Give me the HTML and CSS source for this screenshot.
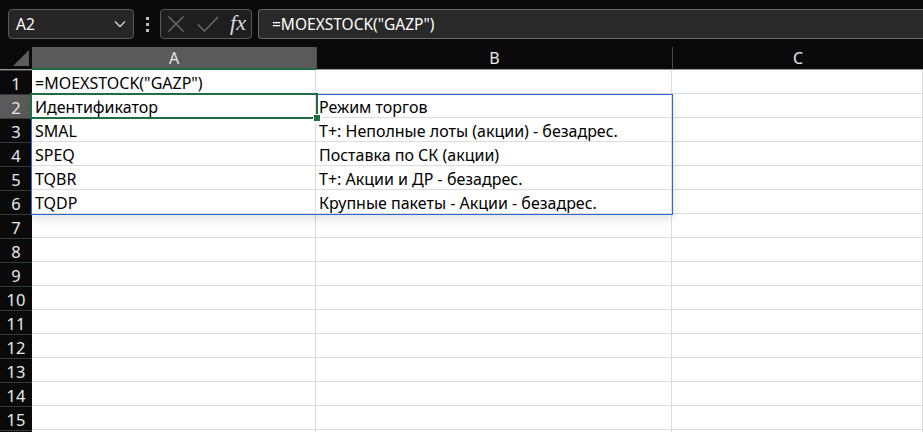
FILE: index.html
```html
<!DOCTYPE html>
<html lang="ru">
<head>
<meta charset="utf-8">
<title>Sheet</title>
<link rel="stylesheet" href="styles.css">
</head>
<body>
<div class="topbar">
  <div class="namebox">
    <span class="name">A2</span>
    <svg class="chev" width="12" height="8" viewBox="0 0 12 8"><path d="M1 1.5 L6 6.5 L11 1.5" fill="none" stroke="#d8d8d8" stroke-width="1.3"/></svg>
  </div>
  <div class="dots"><i></i><i></i><i></i></div>
  <div class="fbtns">
    <svg width="18" height="18" viewBox="0 0 18 18"><path d="M1.5 1.5 L16.5 16.5 M16.5 1.5 L1.5 16.5" stroke="#6e6e6e" stroke-width="1.4"/></svg>
    <svg class="check" width="22" height="18" viewBox="0 0 22 18"><path d="M1 9.5 L7.5 16 L21 2" fill="none" stroke="#6e6e6e" stroke-width="1.4"/></svg>
    <span class="fx">fx</span>
  </div>
  <div class="formula">=MOEXSTOCK("GAZP")</div>
</div>
<div class="sheet">
  <div class="grid">
    <div class="corner"><svg width="16" height="16" viewBox="0 0 16 16"><path d="M16 0 L16 16 L0 16 Z" fill="#5c5c5c"/></svg></div>
    <div class="colh sel">A</div>
    <div class="colh">B</div>
    <div class="colh">C</div>

    <div class="rowh">1</div><div class="cell">=MOEXSTOCK("GAZP")</div><div class="cell"></div><div class="cell"></div>
    <div class="rowh sel">2</div><div class="cell">Идентификатор</div><div class="cell">Режим торгов</div><div class="cell"></div>
    <div class="rowh">3</div><div class="cell">SMAL</div><div class="cell">T+: Неполные лоты (акции) - безадрес.</div><div class="cell"></div>
    <div class="rowh">4</div><div class="cell">SPEQ</div><div class="cell">Поставка по СК (акции)</div><div class="cell"></div>
    <div class="rowh">5</div><div class="cell">TQBR</div><div class="cell">T+: Акции и ДР - безадрес.</div><div class="cell"></div>
    <div class="rowh">6</div><div class="cell">TQDP</div><div class="cell">Крупные пакеты - Акции - безадрес.</div><div class="cell"></div>
    <div class="rowh">7</div><div class="cell"></div><div class="cell"></div><div class="cell"></div>
    <div class="rowh">8</div><div class="cell"></div><div class="cell"></div><div class="cell"></div>
    <div class="rowh">9</div><div class="cell"></div><div class="cell"></div><div class="cell"></div>
    <div class="rowh">10</div><div class="cell"></div><div class="cell"></div><div class="cell"></div>
    <div class="rowh">11</div><div class="cell"></div><div class="cell"></div><div class="cell"></div>
    <div class="rowh">12</div><div class="cell"></div><div class="cell"></div><div class="cell"></div>
    <div class="rowh">13</div><div class="cell"></div><div class="cell"></div><div class="cell"></div>
    <div class="rowh">14</div><div class="cell"></div><div class="cell"></div><div class="cell"></div>
    <div class="rowh">15</div><div class="cell"></div><div class="cell"></div><div class="cell"></div>
    <div class="rowh"></div><div class="cell"></div><div class="cell"></div><div class="cell"></div>
  </div>
  <div class="range"></div>
  <div class="active"><span class="handle"></span></div>
</div>
</body>
</html>
```

FILE: styles.css
```css
* { box-sizing: border-box; }
html, body { margin: 0; padding: 0; }
body {
  background: #0a0a0a;
  width: 923px;
  height: 432px;
  overflow: hidden;
  font-family: "Noto Sans", "Open Sans", sans-serif;
}
.topbar {
  height: 47px;
  display: flex;
  align-items: flex-start;
  padding: 9px 0 0 8px;
}
.namebox {
  width: 126px;
  height: 30px;
  border: 1px solid #5a5a5a;
  border-radius: 4px;
  background: #262626;
  display: flex;
  align-items: center;
  justify-content: space-between;
  padding: 0 7px 0 7px;
  color: #fff;
  font-size: 15.5px;
}
.dots {
  width: 26px;
  height: 30px;
  display: flex;
  flex-direction: column;
  align-items: center;
  justify-content: center;
  gap: 3px;
}
.dots i {
  display: block;
  width: 3px;
  height: 3px;
  background: #bdbdbd;
}
.fbtns {
  width: 92px;
  height: 30px;
  border: 1px solid #5a5a5a;
  border-radius: 4px;
  background: #1e1e1e;
  display: flex;
  align-items: center;
  padding: 0 5px 0 6px;
}
.check { margin-left: 12px; }
.fx {
  margin-left: auto;
  font-family: "Liberation Serif", serif;
  font-style: italic;
  font-size: 22px;
  color: #dcdcdc;
  line-height: 1;
  padding-bottom: 3px;
}
.formula {
  margin-left: 6px;
  flex: 1;
  height: 30px;
  border: 1px solid #6a6a6a;
  border-right: none;
  border-radius: 4px 0 0 4px;
  background: #292929;
  color: #fff;
  font-size: 15.5px;
  display: flex;
  align-items: center;
  padding-left: 13px;
}
.sheet {
  position: relative;
}
.grid {
  display: grid;
  grid-template-columns: 32px 284px 356px 251px;
  grid-template-rows: 23px repeat(16, 24px);
}
.corner {
  background: #0a0a0a;
  display: flex;
  align-items: flex-end;
  justify-content: flex-end;
  padding: 0 3px 3px 0;
  border-bottom: 1px solid #9a9a9a;
}
.colh {
  background: #0a0a0a;
  color: #e8e8e8;
  font-size: 16px;
  display: flex;
  align-items: center;
  justify-content: center;
  border-left: 1px solid #4a4a4a;
  border-bottom: 1px solid #9a9a9a;
}
.colh.sel {
  background: #5a5a5a;
  border-bottom: 2px solid #1e6e42;
  border-left: none;
}
.rowh {
  background: #0a0a0a;
  color: #e8e8e8;
  font-size: 16.5px;
  display: flex;
  align-items: center;
  justify-content: center;
  border-top: 1px solid #3a3a3a;
  padding-top: 1px;
}
.rowh.sel { background: #5a5a5a; }
.cell {
  background: #fff;
  color: #000;
  font-size: 16px;
  border-right: 1px solid #dcdcdc;
  border-bottom: 1px solid #dcdcdc;
  display: flex;
  align-items: center;
  padding: 2px 0 0 3px;
  white-space: nowrap;
}
.range {
  position: absolute;
  left: 31px;
  top: 47px;
  width: 642px;
  height: 121px;
  border: 1px solid #2a67d2;
  box-shadow: 0 4px 10px rgba(0,0,0,0.12);
  pointer-events: none;
}
.active {
  position: absolute;
  left: 30px;
  top: 46px;
  width: 288px;
  height: 26px;
  border: 2px solid #1e6e42;
}
.handle {
  position: absolute;
  right: -4px;
  bottom: -4px;
  width: 6px;
  height: 6px;
  background: #1e6e42;
  outline: 1px solid #fff;
}
```
